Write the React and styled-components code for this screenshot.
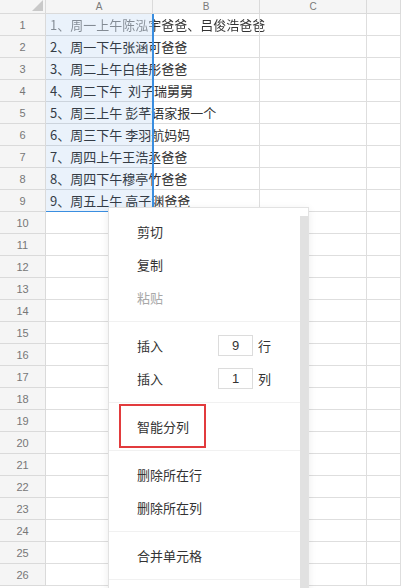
import styled, { createGlobalStyle } from "styled-components"

const GlobalStyle = createGlobalStyle`
  html, body {
    margin: 0;
    padding: 0;
    background: #fff;
    overflow: hidden;
  }
  body {
    font-family: "Noto Sans CJK SC", "Noto Sans", sans-serif;
  }
`;

const rows = [
  "1、周一上午陈泓宇爸爸、吕俊浩爸爸",
  "2、周一下午张涵可爸爸",
  "3、周二上午白佳彤爸爸",
  "4、周二下午  刘子瑞舅舅",
  "5、周三上午 彭芊语家报一个",
  "6、周三下午 李羽航妈妈",
  "7、周四上午王浩丞爸爸",
  "8、周四下午穆亭竹爸爸",
  "9、周五上午 高子渊爸爸",
];

const TOTAL_ROWS = 26;

const App = () => {
  const list = Array.from({ length: TOTAL_ROWS }, (_, i) => rows[i] || "");

  return (
    <>
      <GlobalStyle />
      <Page>
        <Sheet>
          <Corner />
          <ColHeader>A</ColHeader>
          <ColHeader>B</ColHeader>
          <ColHeader>C</ColHeader>
          <ColHeader />
          {list.map((text, i) => (
            <Row key={i}>
              <RowHeader>{i + 1}</RowHeader>
              <Cell>
                {i === 0 ? <ActiveText>{text}</ActiveText> : text}
              </Cell>
              <Cell />
              <Cell />
              <Cell />
            </Row>
          ))}
        </Sheet>
        <Selection />

        <Menu>
          <MenuList>
            <Section>
              <Item>剪切</Item>
              <Item>复制</Item>
              <Item disabled>粘贴</Item>
            </Section>
            <Section>
              <Item>
                <Label>插入</Label>
                <NumBox>9</NumBox>
                <Unit>行</Unit>
              </Item>
              <Item>
                <Label>插入</Label>
                <NumBox>1</NumBox>
                <Unit>列</Unit>
              </Item>
            </Section>
            <Section>
              <Item highlight>智能分列</Item>
            </Section>
            <Section>
              <Item>删除所在行</Item>
              <Item>删除所在列</Item>
            </Section>
            <Section>
              <Item>合并单元格</Item>
            </Section>
            <Section />
          </MenuList>
          <ScrollTrack>
            <Thumb />
          </ScrollTrack>
        </Menu>
      </Page>
    </>
  )
}

const Page = styled.div`
position: relative;
width: 401px;
height: 588px;
overflow: hidden;
background: #fff;
`;

const Sheet = styled.div`
display: grid;
grid-template-columns: 46px 107px 107px 107px 1fr;
grid-auto-rows: 22px;
grid-template-rows: 14px;
`;

const Row = styled.div`
display: contents;
`;

const HeaderBase = styled.div`
box-sizing: border-box;
background: #f5f5f5;
border-right: 1px solid #dadada;
border-bottom: 1px solid #dadada;
color: #7a7a7a;
font-family: "Liberation Sans", "Noto Sans", sans-serif;
display: flex;
align-items: center;
justify-content: center;
`;

const Corner = styled(HeaderBase)`
position: relative;
&::after {
  content: "";
  position: absolute;
  right: 2px;
  bottom: 2px;
  border-style: solid;
  border-width: 0 0 11px 11px;
  border-color: transparent transparent #c9c9c9 transparent;
}
`;

const ColHeader = styled(HeaderBase)`
font-size: 10px;
`;

const RowHeader = styled(HeaderBase)`
font-size: 11px;
color: #777;
`;

const Cell = styled.div`
box-sizing: border-box;
border-right: 1px solid #dedede;
border-bottom: 1px solid #dedede;
padding-left: 4px;
font-size: 13px;
color: #333;
white-space: pre;
overflow: visible;
display: flex;
align-items: center;
`;

const ActiveText = styled.span`
background: linear-gradient(to right, #8c8c8c 103px, #333 103px);
-webkit-background-clip: text;
background-clip: text;
color: transparent;
`;

const Selection = styled.div`
position: absolute;
left: 46px;
top: 14px;
width: 108px;
height: 198px;
box-sizing: border-box;
background: rgba(60, 140, 220, 0.11);
border-right: 2px solid #3a8ee0;
border-bottom: 1px solid #3a8ee0;
pointer-events: none;
`;

const Menu = styled.div`
position: absolute;
left: 108px;
top: 207px;
width: 201px;
height: 400px;
box-sizing: border-box;
background: #fff;
border: 1px solid #e2e2e2;
box-shadow: 0 2px 8px rgba(0, 0, 0, 0.08);
display: flex;
`;

const MenuList = styled.div`
flex: 1;
`;

const Section = styled.div`
padding: 7px 0;
border-bottom: 1px solid #f1f1f1;
`;

const Item = styled.div`
position: relative;
height: 33px;
display: flex;
align-items: center;
padding-left: 28px;
font-size: 13px;
color: ${(p) => (p.disabled ? "#a8a8a8" : "#333")};

${(p) =>
    p.highlight &&
    `
  &::after {
    content: "";
    position: absolute;
    left: 10px;
    top: -6px;
    width: 87px;
    height: 44px;
    box-sizing: border-box;
    border: 2px solid #e23b3d;
  }
`}
`;

const Label = styled.span`
width: 81px;
`;

const NumBox = styled.span`
width: 35px;
height: 21px;
box-sizing: border-box;
border: 1px solid #dcdcdc;
display: flex;
align-items: center;
justify-content: center;
font-family: "Liberation Sans", sans-serif;
font-size: 13px;
color: #333;
`;

const Unit = styled.span`
margin-left: 5px;
`;

const ScrollTrack = styled.div`
width: 8px;
padding-top: 8px;
`;

const Thumb = styled.div`
height: 100%;
background: #e1e1e1;
`;

export default App;
